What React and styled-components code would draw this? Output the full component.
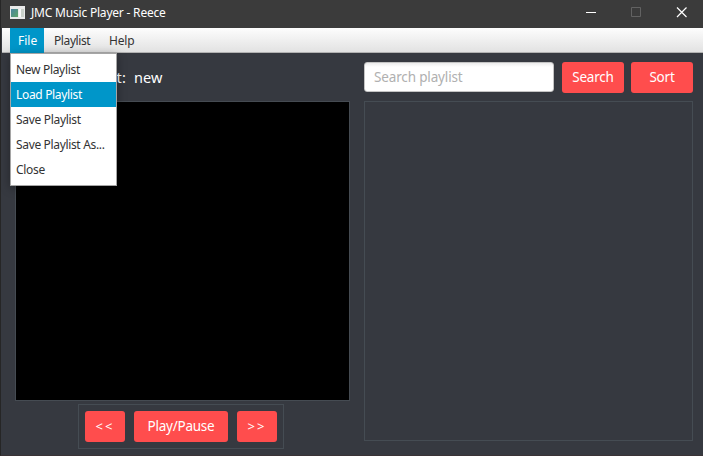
import React from "react";
import styled, { createGlobalStyle } from "styled-components";

const Global = createGlobalStyle`
  * { box-sizing: border-box; }
  body { margin: 0; overflow: hidden; background: #363940; }
`;

const Window = styled.div`
  position: relative;
  width: 703px;
  height: 456px;
  display: flex;
  flex-direction: column;
  border-left: 1px solid #262626;
  border-bottom: 1px solid #3a3336;
  background: #363940;
  font-family: "Noto Sans", "Open Sans", sans-serif;
  color: #fff;
`;

const TitleBar = styled.header`
  display: flex;
  align-items: center;
  flex: 0 0 28px;
  height: 28px;
  padding-left: 9px;
  background: #3b3b3b;
`;

const Label = styled.span`
  display: block;
  white-space: pre;
  font-size: ${(p) => p.$size || 12}px;
  letter-spacing: ${(p) => p.$track || 0}px;
  line-height: 18px;
`;

const Title = styled(Label)`
  flex: 1;
  margin: -2px 0 0 6px;
`;

const AppIcon = styled.svg`
  width: 15px;
  height: 13px;
  margin-top: -4px;
`;

const Caption = styled.svg`
  width: 46px;
  height: 28px;
  margin-right: ${(p) => p.$end || 0}px;
`;

const MenuBar = styled.nav`
  position: relative;
  display: flex;
  flex: 0 0 25px;
  min-height: 0;
  height: 25px;
  margin-left: 1px;
  padding-left: 8px;
  border-bottom: 1px solid #b2b2b2;
  background: linear-gradient(#fdfdfd, #e2e2e2);
`;

const MenuTitle = styled.div`
  width: ${(p) => p.$width}px;
  height: ${(p) => (p.$open ? 25 : 24)}px;
  padding: 4px 0 0 ${(p) => (p.$open ? 8 : 10)}px;
  color: ${(p) => (p.$open ? "#fff" : "#333")};
  background: ${(p) => (p.$open ? "#0096c9" : "transparent")};
`;

const Popup = styled.div`
  position: absolute;
  z-index: 2;
  top: 25px;
  left: 8px;
  width: 107px;
  height: 133px;
  padding: 3px 0 4px;
  border: 1px solid #a5a5a5;
  background: #fff;
  box-shadow: 0 2px 9px rgba(0, 0, 0, 0.35);
`;

const PopupItem = styled.div`
  height: 25px;
  padding: 4px 0 0 5px;
  color: ${(p) => (p.$active ? "#fff" : "#333")};
  background: ${(p) => (p.$active ? "#0096c9" : "transparent")};
`;

const Content = styled.main`
  display: grid;
  grid-template-columns: 335px 329px;
  column-gap: 14px;
  padding: 9px 9px 0 14px;
`;

const Column = styled.section`
  display: flex;
  flex-direction: column;
`;

const NowPlaying = styled.div`
  display: flex;
  height: 39px;
  padding-top: 6px;
`;

const NameLabel = styled(Label)`
  width: 112px;
  margin-right: 7px;
`;

const Screen = styled.div`
  height: 300px;
  border: 1px solid #454b52;
  background: #000;
`;

const Controls = styled.div`
  display: flex;
  gap: 9px;
  width: 206px;
  height: 45px;
  margin: 3px 0 0 63px;
  padding: 6px;
  border: 1px solid #454c53;
`;

const Button = styled.button`
  display: flex;
  justify-content: center;
  width: ${(p) => p.$width}px;
  height: 31px;
  padding: 6px 0 0;
  border: 0;
  border-radius: 3px;
  background: #ff4d4d;
  color: #fff;
  font-family: inherit;
`;

const SearchRow = styled.div`
  display: flex;
  height: 39px;
`;

const Field = styled.div`
  width: 190px;
  height: 30px;
  margin-right: 8px;
  padding: 5px 9px;
  border: 1px solid #c4c4c4;
  border-radius: 3px;
  background: linear-gradient(#ececec, #fff 4px);
  color: #b0b0b0;
`;

const SearchButton = styled(Button)`
  margin-right: 7px;
`;

const TrackList = styled.div`
  height: 340px;
  border: 1px solid #454c53;
`;

const items = [
  ["New Playlist", -0.31],
  ["Load Playlist", -0.33],
  ["Save Playlist", -0.31],
  ["Save Playlist As...", -0.34],
  ["Close", -0.3],
];

export default function App() {
  return (
    <Window>
      <Global />
      <TitleBar>
        <AppIcon viewBox="0 0 15 13">
          <defs>
            <linearGradient id="pane" x2="1" y2="1">
              <stop stopColor="#4b83a0" />
              <stop offset="1" stopColor="#5fa568" />
            </linearGradient>
          </defs>
          <path fill="#e9e9e9" d="M0 0h15v13H0z" />
          <path fill="url(#pane)" d="M1 3h7v8H1z" />
          <path fill="#f7f7f7" d="M9 3h2v8H9z" />
          <path fill="#c9d0c9" d="M11 3h3v8h-3z" />
        </AppIcon>
        <Title $track={-0.2}>JMC Music Player - Reece</Title>
        <Caption viewBox="0 0 46 28"><path stroke="#fff" d="M19 12.5h10" /></Caption>
        <Caption viewBox="0 0 46 28"><path stroke="#626262" fill="none" d="M18.5 7.5h9v9h-9z" /></Caption>
        <Caption viewBox="0 0 46 28" $end={-2}><path stroke="#fff" strokeWidth="1.2" d="M18 7.5l9.5 9.5m0-9.5l-9.5 9.5" /></Caption>
      </TitleBar>
      <MenuBar>
        <MenuTitle $width={34} $open><Label>File</Label></MenuTitle>
        <MenuTitle $width={55} $open={false}><Label $track={-0.4}>Playlist</Label></MenuTitle>
        <MenuTitle $width={44}><Label $track={-0.2}>Help</Label></MenuTitle>
        <Popup>
          {items.map(([text, track], i) => (
            <PopupItem key={text} $active={i === 1}><Label $track={track}>{text}</Label></PopupItem>
          ))}
        </Popup>
      </MenuBar>
      <Content>
        <Column>
          <NowPlaying>
            <NameLabel $size={14.5} $track={0.2}>Current playlist:</NameLabel>
            <Label $size={14.5} $track={0.1}>new</Label>
          </NowPlaying>
          <Screen />
          <Controls>
            <Button $width={40}><Label $size={13} $track={2}>&lt;&lt;</Label></Button>
            <Button $width={94}><Label $size={13.5} $track={-0.25}>Play/Pause</Label></Button>
            <Button $width={40}><Label $size={13} $track={2}>&gt;&gt;</Label></Button>
          </Controls>
        </Column>
        <Column>
          <SearchRow>
            <Field><Label $size={13.5} $track={-0.15}>Search playlist</Label></Field>
            <SearchButton $width={62}><Label $size={13.5} $track={-0.2}>Search</Label></SearchButton>
            <Button $width={62}><Label $size={13.5} $track={-0.2}>Sort</Label></Button>
          </SearchRow>
          <TrackList />
        </Column>
      </Content>
    </Window>
  );
}
